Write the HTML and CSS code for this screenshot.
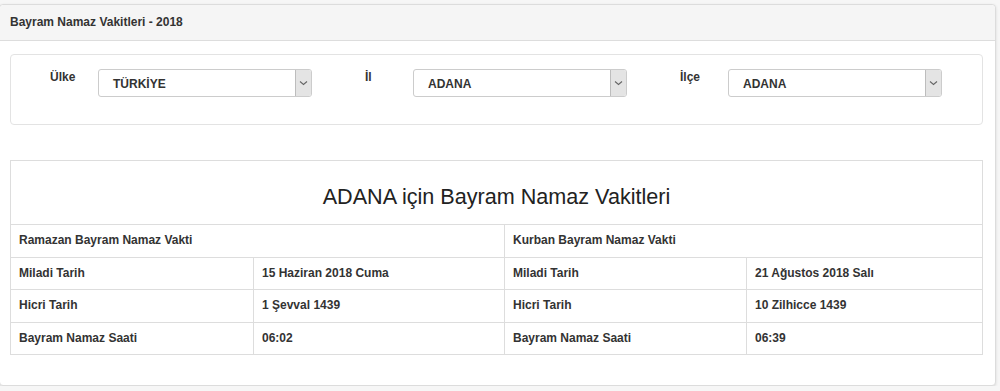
FILE: index.html
```html
<!DOCTYPE html>
<html lang="tr">
<head>
    <meta charset="UTF-8">
    <meta name="viewport" content="width=device-width, initial-scale=1.0">
    <title>Bayram Namaz Vakitleri</title>
    <link rel="stylesheet" href="styles.css">
</head>
<body>

    <div class="panel">
        <div class="panel-heading">Bayram Namaz Vakitleri - 2018</div>
        <div class="panel-body">

            <div class="well">
                <div class="field">
                    <label>Ülke</label>
                    <div class="select">
                        <span class="value">TÜRKİYE</span>
                        <span class="arrow"><svg width="9" height="6" viewBox="0 0 9 6"><path d="M1 1.5 L4.5 4.5 L8 1.5" fill="none" stroke="#666" stroke-width="1.1"/></svg></span>
                    </div>
                </div>
                <div class="field">
                    <label>İl</label>
                    <div class="select">
                        <span class="value">ADANA</span>
                        <span class="arrow"><svg width="9" height="6" viewBox="0 0 9 6"><path d="M1 1.5 L4.5 4.5 L8 1.5" fill="none" stroke="#666" stroke-width="1.1"/></svg></span>
                    </div>
                </div>
                <div class="field">
                    <label>İlçe</label>
                    <div class="select">
                        <span class="value">ADANA</span>
                        <span class="arrow"><svg width="9" height="6" viewBox="0 0 9 6"><path d="M1 1.5 L4.5 4.5 L8 1.5" fill="none" stroke="#666" stroke-width="1.1"/></svg></span>
                    </div>
                </div>
            </div>

            <table class="times">
                <colgroup>
                    <col style="width: 243px">
                    <col style="width: 251px">
                    <col style="width: 242px">
                    <col style="width: 236px">
                </colgroup>
                <tr>
                    <th class="title" colspan="4">ADANA için Bayram Namaz Vakitleri</th>
                </tr>
                <tr>
                    <td colspan="2">Ramazan Bayram Namaz Vakti</td>
                    <td colspan="2">Kurban Bayram Namaz Vakti</td>
                </tr>
                <tr>
                    <td>Miladi Tarih</td>
                    <td>15 Haziran 2018 Cuma</td>
                    <td>Miladi Tarih</td>
                    <td>21 Ağustos 2018 Salı</td>
                </tr>
                <tr>
                    <td>Hicri Tarih</td>
                    <td>1 Şevval 1439</td>
                    <td>Hicri Tarih</td>
                    <td>10 Zilhicce 1439</td>
                </tr>
                <tr>
                    <td>Bayram Namaz Saati</td>
                    <td>06:02</td>
                    <td>Bayram Namaz Saati</td>
                    <td>06:39</td>
                </tr>
            </table>

        </div>
    </div>

</body>
</html>
```

FILE: styles.css
```css
body {
    font-family: "Liberation Sans", Arial, sans-serif;
    font-size: 12px;
    color: #333;
    margin: 0;
    background-color: #f6f6f6;
}
.panel {
    margin: 4px 4px 0 -1px;
    background-color: white;
    border: 1px solid #dcdcdc;
    border-radius: 4px;
    box-shadow: 0 1px 3px rgba(0, 0, 0, 0.12);
}
.panel-heading {
    padding: 10px 10px;
    line-height: 15px;
    font-weight: bold;
    background-color: #f5f5f5;
    border-bottom: 1px solid #dddddd;
    border-radius: 4px 4px 0 0;
}
.panel-body {
    padding: 13px 12px 30px 10px;
}
.well {
    display: grid;
    grid-template-columns: repeat(3, 315px);
    padding: 14px 0 27px 39px;
    border: 1px solid #e3e3e3;
    border-radius: 4px;
}
.field {
    display: flex;
}
.field label {
    width: 48px;
    font-weight: bold;
    line-height: 15px;
    padding-top: 1px;
}
.select {
    display: flex;
    width: 214px;
    height: 28px;
    box-sizing: border-box;
    border: 1px solid #cccccc;
    border-radius: 3px;
    overflow: hidden;
}
.select .value {
    flex: 1;
    padding-left: 14px;
    line-height: 26px;
    font-weight: bold;
    padding-top: 1px;
}
.select .arrow {
    width: 15px;
    display: flex;
    align-items: center;
    justify-content: center;
    background-color: #e4e4e4;
    border-left: 1px solid #bdbdbd;
}
.times {
    width: 972px;
    margin-top: 35px;
    border-collapse: collapse;
    table-layout: fixed;
}
.times td,
.times th {
    border: 1px solid #dddddd;
    padding: 8px 8px;
    line-height: 15.5px;
    font-weight: bold;
    text-align: left;
}
.times th.title {
    padding: 22px 8px 13px;
    line-height: 28px;
    font-size: 21.6px;
    font-weight: normal;
    color: #222;
    text-align: center;
}
```
